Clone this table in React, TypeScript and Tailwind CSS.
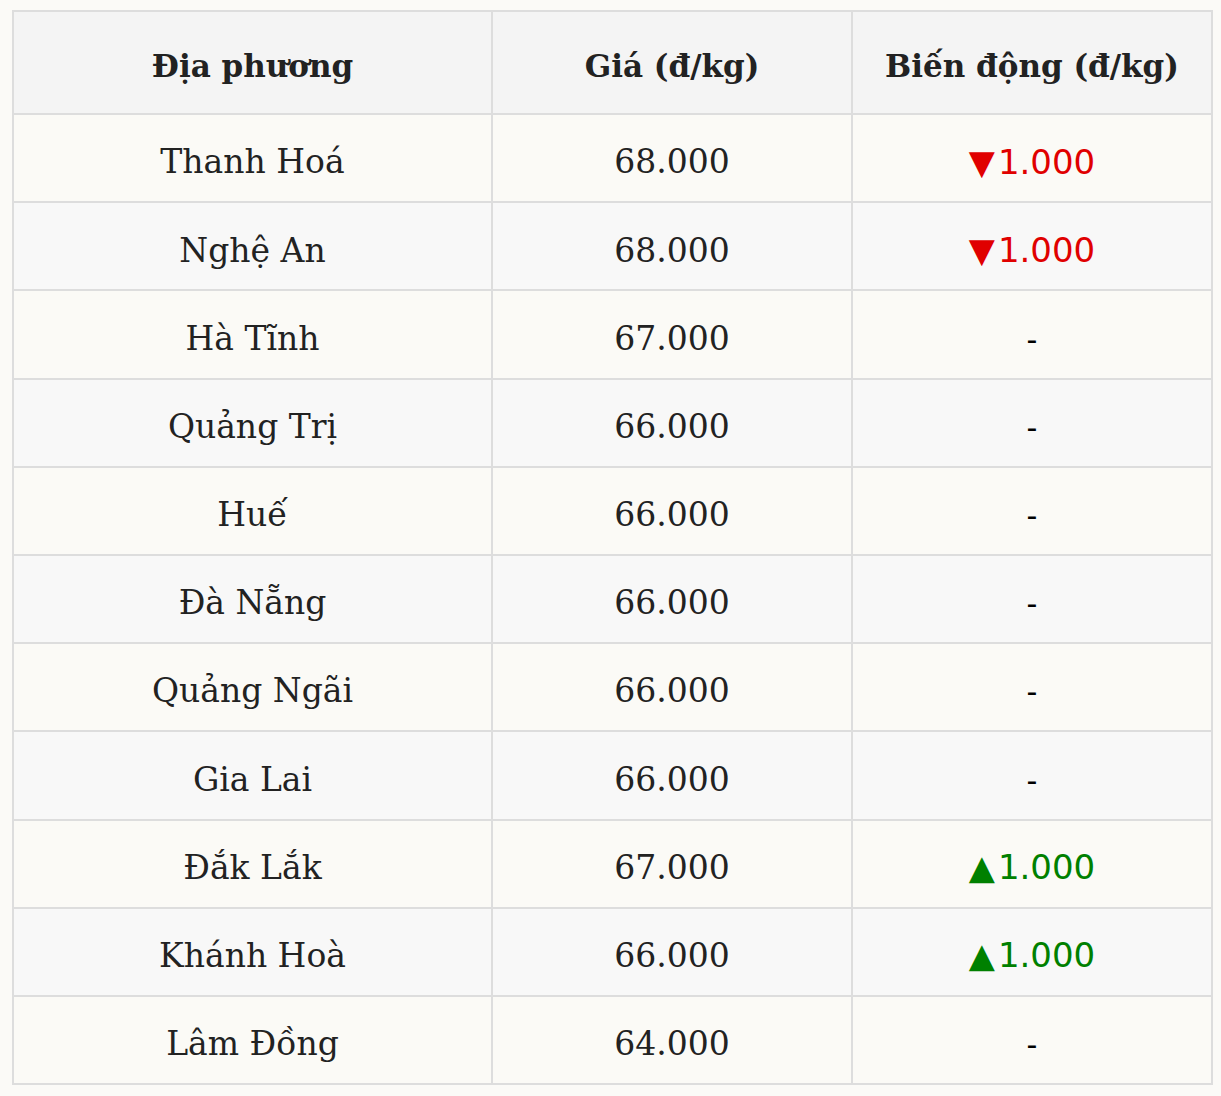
import React from "react";

type Row = { name: string; price: string; change: "down" | "up" | "none" };

const rows: Row[] = [
  { name: "Thanh Hoá", price: "68.000", change: "down" },
  { name: "Nghệ An", price: "68.000", change: "down" },
  { name: "Hà Tĩnh", price: "67.000", change: "none" },
  { name: "Quảng Trị", price: "66.000", change: "none" },
  { name: "Huế", price: "66.000", change: "none" },
  { name: "Đà Nẵng", price: "66.000", change: "none" },
  { name: "Quảng Ngãi", price: "66.000", change: "none" },
  { name: "Gia Lai", price: "66.000", change: "none" },
  { name: "Đắk Lắk", price: "67.000", change: "up" },
  { name: "Khánh Hoà", price: "66.000", change: "up" },
  { name: "Lâm Đồng", price: "64.000", change: "none" },
];

function Change({ c }: { c: Row["change"] }) {
  if (c === "down")
    return (
      <span className="text-[#e00000] font-['DejaVu_Sans',sans-serif] text-[34px]">
        <span className="mr-[3px]">▼</span>1.000
      </span>
    );
  if (c === "up")
    return (
      <span className="text-[#008000] font-['DejaVu_Sans',sans-serif] text-[34px]">
        <span className="mr-[3px]">▲</span>1.000
      </span>
    );
  return <span className="text-black font-['DejaVu_Sans',sans-serif] text-[30px]">-</span>;
}

export default function App() {
  return (
    <div className="w-[1221px] h-[1096px] bg-[#fbfaf7] pt-[10px] pl-[12px]">
      <table className="w-[1199px] table-fixed border-collapse border-2 border-[#dddddd] font-['DejaVu_Serif',serif] text-[#222222]">
        <colgroup>
          <col className="w-[479px]" />
          <col className="w-[360px]" />
          <col className="w-[360px]" />
        </colgroup>
        <thead>
          <tr className="h-[103px] bg-[#f4f4f4]">
            <th className="border-2 border-[#dddddd] text-center align-middle text-[31px] font-bold pt-[8px]">
              Địa phương
            </th>
            <th className="border-2 border-[#dddddd] text-center align-middle text-[31px] font-bold pt-[8px]">
              Giá (đ/kg)
            </th>
            <th className="border-2 border-[#dddddd] text-center align-middle text-[31px] font-bold pt-[8px]">
              Biến động (đ/kg)
            </th>
          </tr>
        </thead>
        <tbody>
          {rows.map((r, i) => (
            <tr
              key={r.name}
              className={i % 2 === 0 ? "h-[88.2px] bg-[#fbfaf6]" : "h-[88.2px] bg-[#f8f8f8]"}
            >
              <td className="border-2 border-[#dddddd] text-center align-middle text-[33px] pt-[8px]">
                {r.name}
              </td>
              <td className="border-2 border-[#dddddd] text-center align-middle text-[33px] pt-[8px]">
                {r.price}
              </td>
              <td className="border-2 border-[#dddddd] text-center align-middle text-[33px] pt-[8px]">
                <Change c={r.change} />
              </td>
            </tr>
          ))}
        </tbody>
      </table>
    </div>
  );
}
